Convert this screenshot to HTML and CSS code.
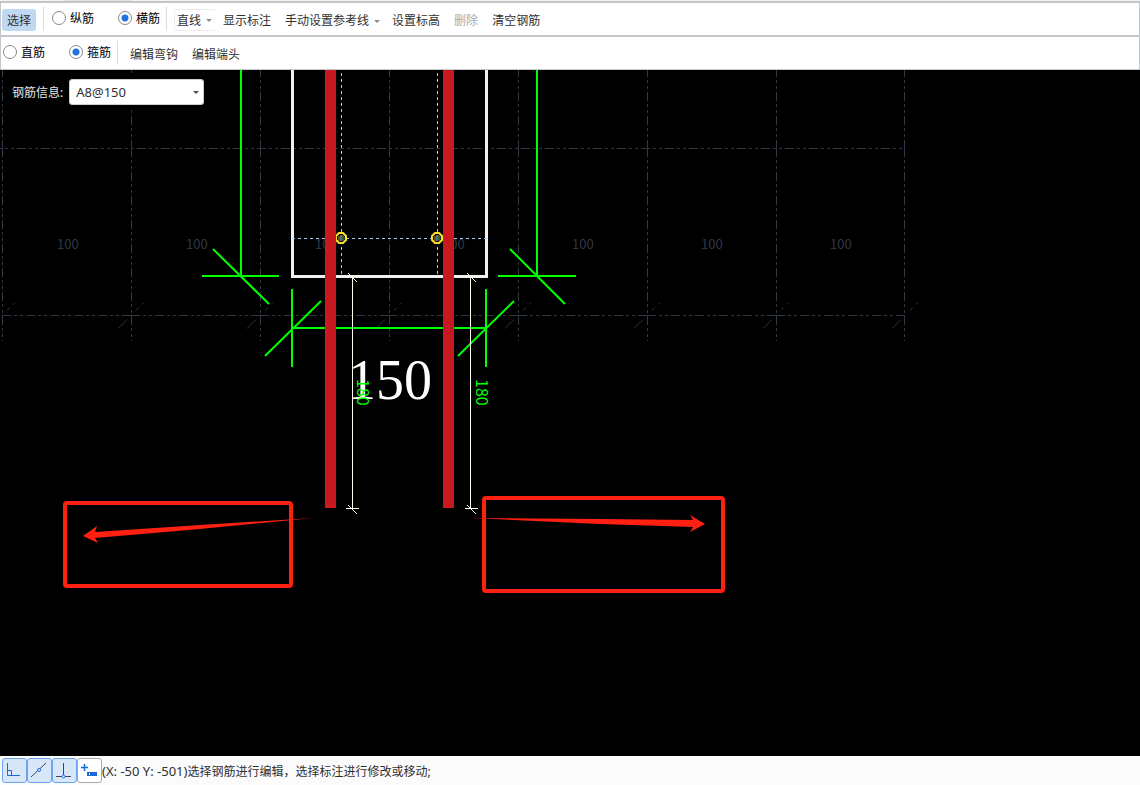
FILE: index.html
```html
<!DOCTYPE html>
<html lang="zh-CN">
<head>
<meta charset="utf-8">
<title>钢筋编辑</title>
<link rel="stylesheet" href="styles.css">
</head>
<body>
<div class="app">
  <div class="strip"><div class="strip-tab"></div></div>
  <div class="toolbar">
    <button class="tool tool-active" type="button">选择</button>
    <span class="sep"></span>
    <div class="radios">
      <label class="radio"><input type="radio" name="bar">纵筋</label>
      <label class="radio"><input type="radio" name="bar" checked>横筋</label>
    </div>
    <span class="sep"></span>
    <div class="tools">
      <button class="tool tool-menu tool-line" type="button">直线<span class="caret"></span></button>
      <button class="tool" type="button">显示标注</button>
      <button class="tool tool-menu" type="button">手动设置参考线<span class="caret"></span></button>
      <button class="tool" type="button">设置标高</button>
      <button class="tool" type="button" disabled>删除</button>
      <button class="tool" type="button">清空钢筋</button>
    </div>
  </div>
  <div class="toolbar toolbar-second">
    <div class="radios">
      <label class="radio"><input type="radio" name="shape">直筋</label>
      <label class="radio"><input type="radio" name="shape" checked>箍筋</label>
    </div>
    <span class="sep"></span>
    <div class="tools">
      <button class="tool" type="button">编辑弯钩</button>
      <button class="tool" type="button">编辑端头</button>
    </div>
  </div>
  <main class="canvas">
    <svg class="drawing" aria-label="钢筋图">
      <defs>
        <path id="tick" d="M-13 13.500L-4 4.500M5 -4.500L8 -7.500M11 -10.500L13 -12.500"/>
        <g id="rebar">
          <path d="M-2 -5H2L5 -2V2L2 5H-2L-5 2V-2Z" fill="#000" stroke="#ffdf20" stroke-width="2"/>
          <path d="M-2 -2V3" stroke="#e0a520"/>
          <path d="M0 -3V3" stroke="#a8caf0"/>
          <ellipse cx="2" cy="0" rx="1" ry="2.500" fill="none" stroke="#4d9a4a"/>
        </g>
      </defs>
      <g transform="translate(0 -70)">
        <g class="grid">
          <path stroke-dashoffset="7" d="M0 148.500H905"/>
          <path d="M2 315.500H131M131 315.500H260M260 315.500H389M389 315.500H518M518 315.500H647M647 315.500H776M776 315.500H905"/>
          <path d="M2.500 68V148M131.500 68V148M260.500 68V148M389.500 68V148M518.500 68V148M647.500 68V148M776.500 68V148M904.500 68V148"/>
          <path d="M2.500 148V341M131.500 148V341M260.500 148V341M389.500 148V341M518.500 148V341M647.500 148V341M776.500 148V341M904.500 148V341"/>
        </g>
        <g class="ticks">
          <use href="#tick" x="2" y="315"/><use href="#tick" x="131" y="315"/><use href="#tick" x="260" y="315"/><use href="#tick" x="389" y="315"/>
          <use href="#tick" x="518" y="315"/><use href="#tick" x="647" y="315"/><use href="#tick" x="776" y="315"/><use href="#tick" x="905" y="315"/>
        </g>
        <g class="grid-text">
          <text x="57" y="249">100</text><text x="186" y="249">100</text><text x="315" y="249">100</text><text x="443" y="249">100</text>
          <text x="572" y="249">100</text><text x="701" y="249">100</text><text x="830" y="249">100</text>
        </g>
        <path class="column" d="M292.500 68V276.500H486.500V68"/>
        <path class="guide" d="M341.500 67V276M437.500 67V276M292 238.500H487"/>
        <use href="#rebar" x="341" y="238"/>
        <use href="#rebar" x="437" y="238"/>
        <g class="green">
          <path d="M241 68V276M202 276H279M213 249L269 304"/>
          <path d="M537 68V276M498 276H576M510 249L565 304"/>
          <path d="M292 289V367M265 356L321 301M292 328H486M486 289V367M458 356L514 301"/>
        </g>
        <text class="span-text" x="348" y="399">150</text>
        <path class="bar" d="M325 68H336V508H325ZM443 68H454V508H443Z"/>
        <path class="white" d="M352.500 276V509M346 508.500H359M348 505L357 514M348 273L357 282M346 276.500H359"/>
        <path class="white" d="M470.500 276V509M465 508.500H478M467 505L476 514M467 273L476 282M465 276.500H478"/>
        <text class="dim-text" transform="translate(357 379) rotate(90)">180</text>
        <text class="dim-text" transform="translate(476 379) rotate(90)">180</text>
        <g class="note">
          <rect x="65" y="503" width="226" height="83" rx="2"/>
          <rect x="484" y="498" width="239" height="93" rx="2"/>
          <path d="M83 536L97 526L95 532L200 525L313 518L200 529L95 538L98 543Z"/>
          <path d="M705 524L690 515L693 520L600 519L472 518L600 524L693 527L690 532Z"/>
        </g>
      </g>
    </svg>
    <div class="info">
      <label for="rebar-info">钢筋信息:</label>
      <div class="combo">
        <select id="rebar-info"><option>A8@150</option></select>
        <span class="caret caret-dark"></span>
      </div>
    </div>
  </main>
  <footer class="status">
    <div class="snaps">
      <button class="snap snap-on" type="button" aria-label="正交"><svg viewBox="0 0 23 23"><path d="M4.500 4V16.500H17M4.500 11.500H8.500V16.500" fill="none" stroke="#1769dc"/></svg></button>
      <button class="snap snap-on" type="button" aria-label="中点"><svg viewBox="0 0 23 23"><path d="M3 18L18 4" stroke="#3d4653"/><circle cx="11" cy="11" r="1.500" fill="#e8f1ff" stroke="#1c72e8"/></svg></button>
      <button class="snap snap-on" type="button" aria-label="垂足"><svg viewBox="0 0 23 23"><path d="M10.500 4V16M3 17.500H18" stroke="#3d4653"/><circle cx="10.500" cy="17.500" r="1.500" fill="#e8f1ff" stroke="#1c72e8"/></svg></button>
      <button class="snap" type="button" aria-label="动态输入"><svg viewBox="0 0 23 23"><path d="M3 8.500H10M6.500 5V12" stroke="#1769dc" stroke-width="1.500"/><rect x="9" y="13" width="10" height="4" fill="#1769dc"/><path d="M11.500 14V16" stroke="#fff"/></svg></button>
    </div>
    <span class="status-text"><span class="coords">(X: -50 Y: -501)</span>选择钢筋进行编辑，选择标注进行修改或移动;</span>
  </footer>
</div>
</body>
</html>
```
FILE: styles.css
```css
* { box-sizing: border-box; }
body {
  margin: 0;
  font: 12px/16px "Noto Sans", "Noto Sans CJK SC", sans-serif;
  color: #303030;
}
button, select, input { font: inherit; color: inherit; margin: 0; }
.app { display: flex; flex-direction: column; min-height: 100vh; }
.strip { height: 1px; background: #f3f3f3; }
.strip-tab { width: 66px; height: 1px; margin-left: 65px; background: #dedede; }
.toolbar {
  display: flex;
  align-items: center;
  height: 34px;
  padding-left: 1px;
  border: 1px solid #c3c7cc;
  border-width: 2px 1px 0;
  background: #fff;
}
.toolbar-second { height: 35px; padding-left: 2px; border-bottom-width: 1px; }
.sep { width: 1px; height: 24px; background: #dcdcdc; }
.tools { display: flex; align-items: center; padding: 2px 0 0 7px; }
.toolbar-second .tools { padding-left: 5px; }
.tool {
  display: flex;
  align-items: center;
  height: 22px;
  padding: 2px 5px 0;
  border: 0;
  border-radius: 3px;
  background: none;
  white-space: nowrap;
}
.tools .tool { padding: 2px 7px 0; }
.tool:disabled { color: #aaa; }
.tool-active { margin: 2px 7px 0 0; background: #c0d9f3; }
.tools .tool-menu { gap: 5px; padding-right: 5px; }
.tools .tool-line { padding: 1px 4px 0 2px; border: 1px solid #ececec; border-right: 0; }
.caret {
  width: 0;
  height: 0;
  border: 3px solid transparent;
  border-top-color: #8a8a8a;
  border-bottom: 0;
}
.caret-dark { border-top-color: #4a4f5c; }
.radios { display: flex; gap: 24px; padding: 0 6px 0 8px; color: #000; }
.toolbar-second .radios { padding-left: 0; }
.radio { display: flex; align-items: center; gap: 4px; white-space: nowrap; }
.radio input {
  appearance: none;
  width: 14px;
  height: 14px;
  margin-bottom: 2px;
  border: 1px solid #888;
  border-radius: 50%;
  background: #fff;
}
.radio input:checked { background: radial-gradient(circle, #2274e0 3px, #fff 4px); }
.canvas { position: relative; flex: 1; overflow: hidden; background: #000; }
.drawing { position: absolute; inset: 0; width: 100%; height: 100%; }
.grid { stroke: #303744; stroke-dasharray: 9 3 3 3 3 3; fill: none; }
.ticks { stroke: #303744; fill: none; }
.grid-text { fill: #303744; font: 13px "Noto Sans CJK SC", sans-serif; }
.column { stroke: #f0f0f0; stroke-width: 3px; fill: none; }
.guide { stroke: #a8caf0; stroke-dasharray: 3 3; fill: none; }
.green { stroke: #00ff00; stroke-width: 2px; fill: none; }
.bar { fill: #c8191f; }
.white { stroke: #fffff0; fill: none; }
.span-text { fill: #fff; font: 56px "Liberation Serif", serif; }
.dim-text { fill: #00ff00; font: 16px "Noto Sans CJK SC", sans-serif; }
.note rect { stroke: #ff2012; stroke-width: 4px; fill: none; }
.note path { fill: #ff2012; }
.info {
  position: absolute;
  top: 3px;
  left: 4px;
  display: flex;
  align-items: center;
  gap: 6px;
  padding: 6px 6px 5px 8px;
  background: #000;
  color: #e6e6e6;
}
.info label { padding-top: 2px; }
.combo { position: relative; color: #303030; }
.combo select {
  appearance: none;
  display: block;
  width: 135px;
  height: 26px;
  padding: 0 20px 0 6px;
  border: 1px solid #cfcfcf;
  border-radius: 3px;
  background: #fff;
  font-size: 13px;
}
.combo .caret { position: absolute; top: 12px; right: 5px; pointer-events: none; }
.status { display: flex; align-items: center; height: 29px; padding-left: 2px; background: #fbfbfb; }
.snaps { display: flex; }
.snap {
  width: 25px;
  height: 25px;
  padding: 0;
  border: 1px solid #a9a9a9;
  border-radius: 3px;
  background: #fff;
}
.snap svg { display: block; width: 23px; height: 23px; }
.snap-on { border-color: #6ba4ee; background: #d8e6fa; }
.status-text { padding-top: 2px; white-space: nowrap; }
.coords { font-size: 13px; }
```
